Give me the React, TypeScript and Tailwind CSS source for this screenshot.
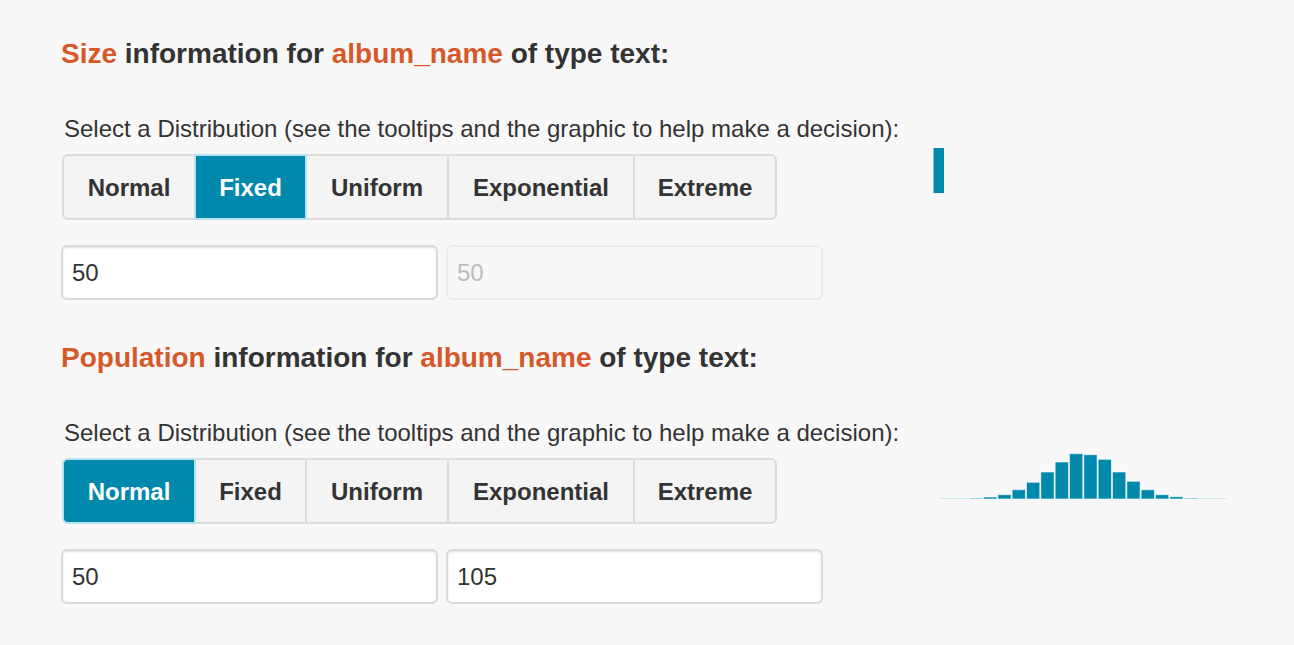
import React from 'react';

const DISTS = ['Normal', 'Fixed', 'Uniform', 'Exponential', 'Extreme'];
const WIDTHS = ['w-[134px]', 'w-[113px]', 'w-[144px]', 'w-[188px]', 'w-[144px]'];

const HIST = [0.4, 0.4, 1, 2, 4.3, 9.3, 16.7, 27, 37, 45.3, 44.3, 39.7, 27, 17.7, 9.3, 4.3, 2.3, 1, 0.4, 0.4];

function DistButtons({ active }: { active: string }) {
  return (
    <div className="flex mt-[11px]">
      {DISTS.map((d, i) => (
        <button
          key={d}
          className={`${WIDTHS[i]} h-[66px] border-2 pt-[2px] text-[24px] font-bold ${i > 0 ? '-ml-[2px]' : ''} ${
            i === 0 ? 'rounded-l-[6px]' : ''
          } ${i === DISTS.length - 1 ? 'rounded-r-[6px]' : ''} ${
            d === active
              ? 'relative z-10 bg-[#0089ad] border-[#b5e1f0] text-white'
              : 'bg-[#f4f4f4] border-[#dcdcdc] text-[#333]'
          }`}
        >
          {d}
        </button>
      ))}
    </div>
  );
}

function Histogram() {
  const pitch = 14.33;
  return (
    <svg width="292" height="48" className="ml-[7px]">
      {HIST.map((h, i) => (
        <rect
          key={i}
          x={i * pitch + 0.5}
          y={47 - h}
          width={pitch - 1}
          height={h}
          fill="#0089ad"
          stroke="#ffffff"
          strokeOpacity={0.6}
          strokeWidth={1}
        />
      ))}
    </svg>
  );
}

function Section({
  kind,
  active,
  second,
  disabled,
  graphic,
  first,
}: {
  kind: string;
  active: string;
  second: string;
  disabled: boolean;
  graphic: React.ReactNode;
  first: boolean;
}) {
  return (
    <div className={first ? 'pt-[38px]' : 'pt-[42px]'}>
      <h3 className="text-[28px] leading-[32px] font-bold text-[#333]">
        <span className="text-[#d6582a]">{kind}</span> information for{' '}
        <span className="text-[#d6582a]">album_name</span> of type text:
      </h3>
      <div className="flex mt-[45px]">
        <div className="w-[762px]">
          <p className="pl-[3px] text-[24px] leading-[28px] text-[#333] whitespace-nowrap">
            Select a Distribution (see the tooltips and the graphic to help make a decision):
          </p>
          <div className="pl-[1px]">
            <DistButtons active={active} />
          </div>
          <div className="flex gap-[8px] mt-[25px]">
            <input
              readOnly
              value="50"
              className="w-[377px] h-[55px] border-2 border-[#dadada] rounded-[6px] bg-white px-[9px] text-[24px] text-[#333] shadow-[inset_0_1px_2px_rgba(0,0,0,0.12)] outline-none"
            />
            <input
              readOnly
              disabled={disabled}
              value={second}
              className={`w-[377px] h-[55px] border-2 rounded-[6px] px-[9px] text-[24px] outline-none ${
                disabled
                  ? 'bg-[#f8f8f8] border-[#ececec] text-[#bbbbbb]'
                  : 'bg-white border-[#dadada] text-[#333] shadow-[inset_0_1px_2px_rgba(0,0,0,0.12)]'
              }`}
            />
          </div>
        </div>
        <div className="ml-[110px] pt-[33px]">{graphic}</div>
      </div>
    </div>
  );
}

export default function App() {
  return (
    <div className="min-h-screen bg-[#f8f8f8] pl-[61px] font-['Liberation_Sans',Arial,sans-serif]">
      <Section
        first
        kind="Size"
        active="Fixed"
        second="50"
        disabled
        graphic={<div className="w-[11px] h-[45px] bg-[#0089ad] border-l border-[#7cc4da]" />}
      />
      <Section
        first={false}
        kind="Population"
        active="Normal"
        second="105"
        disabled={false}
        graphic={<Histogram />}
      />
    </div>
  );
}
